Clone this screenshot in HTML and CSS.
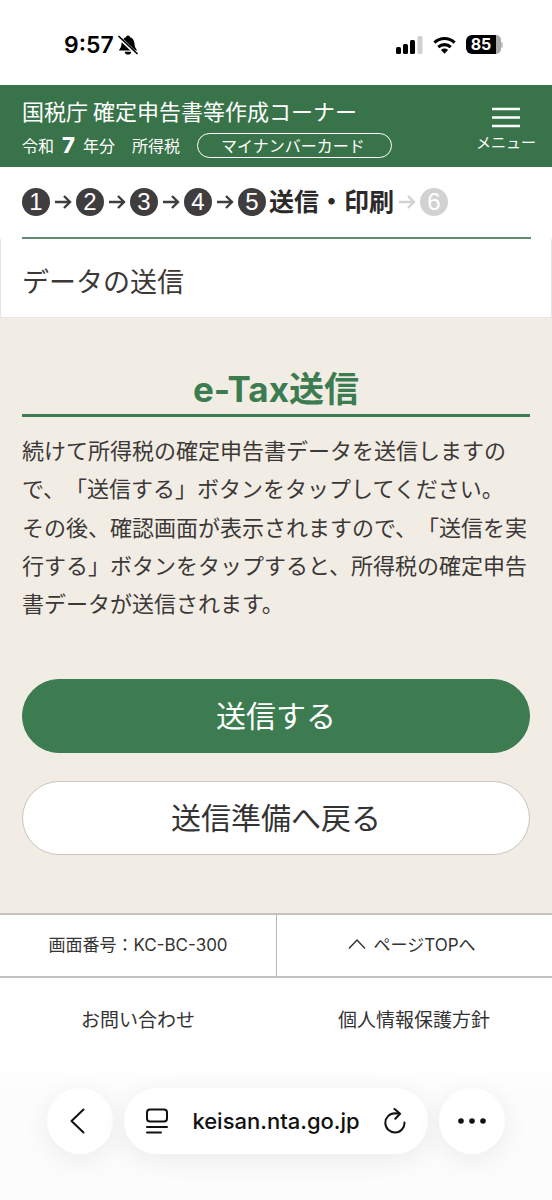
FILE: index.html
```html
<!DOCTYPE html>
<html lang="ja">
<head>
<meta charset="utf-8">
<meta name="viewport" content="width=device-width, initial-scale=1">
<title>データの送信</title>
<link rel="stylesheet" href="styles.css">
</head>
<body>
<div class="status-bar">
  <div class="status-group status-left">
    <span class="clock">9:57</span>
    <svg class="bell" width="20" height="22" viewBox="0 0 20 22" aria-hidden="true">
      <path d="M1 16.600c0-1.200 2-2.400 2.300-5.400.4-4.600 1.700-7.200 4.500-8a2.300 2.300 0 0 1 4.400 0c2.800.8 4.100 3.400 4.500 8 .3 3 2.300 4.200 2.300 5.400z" fill="#000"/>
      <path d="M6.800 17.800h6.400a3.200 2.800 0 0 1-6.400 0z" fill="#000"/>
      <path d="M1 3.300 18.500 20" stroke="#fff" stroke-width="3.600"/>
      <path d="M1 2.500 19 19.500" stroke="#000" stroke-width="1.700" stroke-linecap="round"/>
    </svg>
  </div>
  <div class="status-group status-right">
    <svg width="27" height="18" viewBox="0 0 27 18" aria-hidden="true">
      <rect x="0" y="11" width="5" height="7" rx="1.500"/>
      <rect x="7" y="8" width="5" height="10" rx="1.500"/>
      <rect x="14" y="4" width="5" height="14" rx="1.500"/>
      <rect x="21.500" y="0" width="5" height="18" rx="1.500" fill="#d0d0d0"/>
    </svg>
    <svg width="23" height="18" viewBox="0 0 24 18" fill="none" stroke="#000" stroke-width="3.300" aria-hidden="true">
      <path d="M1.500 6.500a15 15 0 0 1 21 0"/>
      <path d="M5.500 11.200a9.500 9.500 0 0 1 13 0"/>
      <path d="M12 18 8.300 14.200a5.400 5.400 0 0 1 7.400 0z" fill="#000" stroke="none"/>
    </svg>
    <div class="battery"><span class="battery-level">85</span><span class="battery-rest"></span><span class="battery-tip"></span></div>
  </div>
</div>

<header class="site-header">
  <div class="site-info">
    <p class="site-name">国税庁 確定申告書等作成コーナー</p>
    <div class="filing">
      <span class="year">令和<b class="year-number">7</b>年分</span>
      <span>所得税</span>
      <span class="card-badge">マイナンバーカード</span>
    </div>
  </div>
  <button class="menu" type="button">
    <svg width="28" height="21" viewBox="0 0 28 21" stroke="#fff" stroke-width="2.500" aria-hidden="true"><path d="M0 2h28M0 10.500h28M0 19h28"/></svg>
    <span>メニュー</span>
  </button>
</header>

<div class="progress">
  <ol class="steps">
    <li class="step"><span class="dot">1</span></li>
    <li class="step"><svg class="arrow" viewBox="0 0 26 16"><path d="M5 8h15M14 2l6 6-6 6"/></svg><span class="dot">2</span></li>
    <li class="step"><svg class="arrow" viewBox="0 0 26 16"><path d="M5 8h15M14 2l6 6-6 6"/></svg><span class="dot">3</span></li>
    <li class="step"><svg class="arrow" viewBox="0 0 26 16"><path d="M5 8h15M14 2l6 6-6 6"/></svg><span class="dot">4</span></li>
    <li class="step"><svg class="arrow" viewBox="0 0 26 16"><path d="M5 8h15M14 2l6 6-6 6"/></svg><span class="dot">5</span><strong class="step-name">送信・印刷</strong></li>
    <li class="step upcoming"><svg class="arrow" viewBox="0 0 26 16"><path d="M5 8h15M14 2l6 6-6 6"/></svg><span class="dot">6</span></li>
  </ol>
</div>
<h1 class="page-title">データの送信</h1>

<main class="content">
  <h2 class="section-title">e-Tax送信</h2>
  <div class="message">
    <p>続けて所得税の確定申告書データを送信しますので、「送信する」ボタンをタップしてください。</p>
    <p>その後、確認画面が表示されますので、「送信を実行する」ボタンをタップすると、所得税の確定申告書データが送信されます。</p>
  </div>
  <div class="actions">
    <button class="action primary" type="button">送信する</button>
    <button class="action" type="button">送信準備へ戻る</button>
  </div>
</main>

<footer class="site-footer">
  <div class="footer-row footer-tools">
    <span class="footer-cell">画面番号：KC-BC-300</span>
    <a class="footer-cell" href="#"><svg width="18" height="16" viewBox="0 0 18 16" fill="none" stroke="#333" stroke-width="1.500" aria-hidden="true"><path d="M1 10.500 9 2l8 8.500"/></svg>ページTOPへ</a>
  </div>
  <div class="footer-row footer-links">
    <a class="footer-cell" href="#">お問い合わせ</a>
    <a class="footer-cell" href="#">個人情報保護方針</a>
  </div>
</footer>

<nav class="browser-bar" aria-label="ブラウザ">
  <button class="round" type="button" aria-label="戻る">
    <svg width="20" height="26" viewBox="0 0 20 26" fill="none" stroke="#111" stroke-width="2" stroke-linecap="round" stroke-linejoin="round"><path d="M13.500 1.500 1.500 13l12 11.500"/></svg>
  </button>
  <div class="address">
    <button class="icon-button" type="button" aria-label="ページメニュー">
      <svg width="22" height="26" viewBox="0 0 22 26" fill="none" stroke="#111" stroke-width="2" stroke-linecap="round"><rect x="1" y="1.500" width="20" height="12" rx="3"/><path d="M1 19h20M1 24.500h14"/></svg>
    </button>
    <span class="domain">keisan.nta.go.jp</span>
    <button class="icon-button" type="button" aria-label="再読み込み">
      <svg width="22" height="26" viewBox="0 0 22 26" fill="none" stroke="#111" stroke-width="2" stroke-linecap="round" stroke-linejoin="round"><path d="M20.500 14.500a9.600 9.600 0 1 1-9.600-9.200l5 .4M10.500 1l5.600 4.700-4.800 5"/></svg>
    </button>
  </div>
  <button class="round" type="button" aria-label="その他">
    <svg width="28" height="6" viewBox="0 0 28 6" fill="#111"><circle cx="3" cy="3" r="2.800"/><circle cx="14" cy="3" r="2.800"/><circle cx="25" cy="3" r="2.800"/></svg>
  </button>
</nav>
</body>
</html>
```

FILE: styles.css
```css
* {
  box-sizing: border-box;
}

body {
  margin: 0;
  min-height: 100vh;
  display: flex;
  flex-direction: column;
  background: #fff;
  color: #3c3838;
  font-family: "Inter", "Noto Sans CJK JP", sans-serif;
  text-spacing-trim: space-all;
}

h1, h2, p, ol {
  margin: 0;
  padding: 0;
}

button {
  border: 0;
  padding: 0;
  background: none;
  color: inherit;
  font: inherit;
  cursor: pointer;
}

a {
  color: inherit;
  text-decoration: none;
}

svg {
  display: block;
  flex: none;
}

/* Phone status bar */
.status-bar {
  display: flex;
  justify-content: space-between;
  align-items: center;
  height: 85px;
  padding: 4px 49px 0 64px;
  color: #000;
}

.status-group {
  display: flex;
  align-items: center;
}

.status-left {
  gap: 4px;
}

.status-right {
  gap: 10px;
}

.clock {
  font-size: 23px;
  line-height: 28px;
  font-weight: 600;
}

.battery {
  display: flex;
  align-items: center;
  height: 19px;
}

.battery-level {
  width: 30px;
  border-radius: 6px 0 0 6px;
  background: #000;
  color: #fff;
  font-size: 16px;
  line-height: 19px;
  font-weight: 700;
  text-align: center;
}

.battery-rest {
  width: 5px;
  height: 19px;
  border-radius: 0 6px 6px 0;
  background: #a8a8a8;
}

.battery-tip {
  width: 2px;
  height: 6px;
  border-radius: 0 2px 2px 0;
  background: #c4c4c4;
}

/* Site header */
.site-header {
  display: flex;
  justify-content: space-between;
  align-items: flex-start;
  height: 82px;
  padding: 9px 16px 0 22px;
  background: #397349;
  color: #fff;
  font-family: "Noto Sans CJK JP", sans-serif;
}

.site-name {
  font-size: 22px;
  line-height: 32px;
}

.filing {
  display: flex;
  align-items: center;
  gap: 17px;
  margin-top: 6px;
  font-size: 16px;
  line-height: 26px;
}

.year {
  display: flex;
  align-items: center;
  gap: 8px;
}

.year-number {
  font-family: "Inter", sans-serif;
  font-size: 22px;
  font-weight: 800;
}

.card-badge {
  padding: 0 26px 0 23px;
  border: 1px solid #fff;
  border-radius: 13px;
  line-height: 23px;
}

.menu {
  display: flex;
  flex-direction: column;
  align-items: center;
  gap: 4px;
  padding-top: 13px;
  font-size: 15px;
  line-height: 20px;
}

/* Progress */
.progress {
  padding: 0 21px 0 22px;
}

.steps {
  display: flex;
  align-items: center;
  height: 72px;
  border-bottom: 2px solid #5f8c74;
  list-style: none;
}

.step {
  display: flex;
  align-items: center;
  color: #3f3d3e;
}

.upcoming {
  color: #d2d2d2;
}

.dot {
  width: 28px;
  border-radius: 50%;
  background: currentColor;
  font-family: "Liberation Sans", sans-serif;
  font-size: 24px;
  line-height: 28px;
  text-align: center;
}

.dot::first-letter {
  color: #fff;
}

.arrow {
  width: 26px;
  height: 16px;
  fill: none;
  stroke: currentColor;
  stroke-width: 2.4;
}

.step-name {
  margin-left: 3px;
  color: #2b292a;
  font-size: 25px;
  line-height: 36px;
  font-weight: 700;
}

.page-title {
  padding: 24px 21px 14px;
  border: solid #e6e6e4;
  border-width: 0 1px 1px;
  font-size: 27px;
  line-height: 40px;
  font-weight: 400;
}

/* Main content */
.content {
  padding: 47px 22px 58px;
  background: #f1ede5;
}

.section-title {
  padding-bottom: 1px;
  border-bottom: 3px solid #3c7c50;
  color: #3c7c50;
  font-size: 35px;
  line-height: 48px;
  font-weight: 700;
  text-align: center;
}

.message {
  display: grid;
  gap: 1px;
  padding-top: 15px;
  font-size: 22px;
  line-height: 38px;
}

.actions {
  display: grid;
  gap: 28px;
  margin-top: 56px;
}

.action {
  height: 74px;
  border: 1px solid #c9c5be;
  border-radius: 37px;
  background: #fff;
  color: #333;
  font-size: 30px;
  line-height: 44px;
}

.primary {
  border-color: #3c7c50;
  background: #3c7c50;
  color: #fff;
}

/* Footer */
.footer-row {
  display: grid;
  grid-template-columns: 1fr 1fr;
  color: #333;
}

.footer-cell {
  display: flex;
  justify-content: center;
  align-items: center;
}

.footer-tools {
  border: solid #c4c2c0;
  border-width: 2px 0;
  font-size: 17px;
  line-height: 61px;
}

.footer-tools .footer-cell {
  gap: 8px;
  padding-right: 6px;
}

.footer-tools .footer-cell:first-child {
  padding-right: 0;
}

.footer-tools .footer-cell + .footer-cell {
  border-left: 1px solid #b8b6b4;
}

.footer-links {
  font-size: 19px;
  line-height: 86px;
}

/* Browser toolbar */
.browser-bar {
  flex: 1;
  display: flex;
  align-items: flex-start;
  gap: 11px;
  padding: 24px 47px 46px;
  background: linear-gradient(#fff, #fcfcfc 30px);
  color: #111;
}

.round,
.address {
  display: flex;
  align-items: center;
  height: 66px;
  border-radius: 33px;
  background: #fff;
  box-shadow: 0 6px 28px rgba(0, 0, 0, 0.07);
}

.round {
  flex: none;
  justify-content: center;
  width: 66px;
}

.address {
  flex: 1;
  justify-content: space-between;
  padding: 0 22px;
}

.domain {
  font-size: 22px;
  line-height: 28px;
  font-weight: 500;
}
```
